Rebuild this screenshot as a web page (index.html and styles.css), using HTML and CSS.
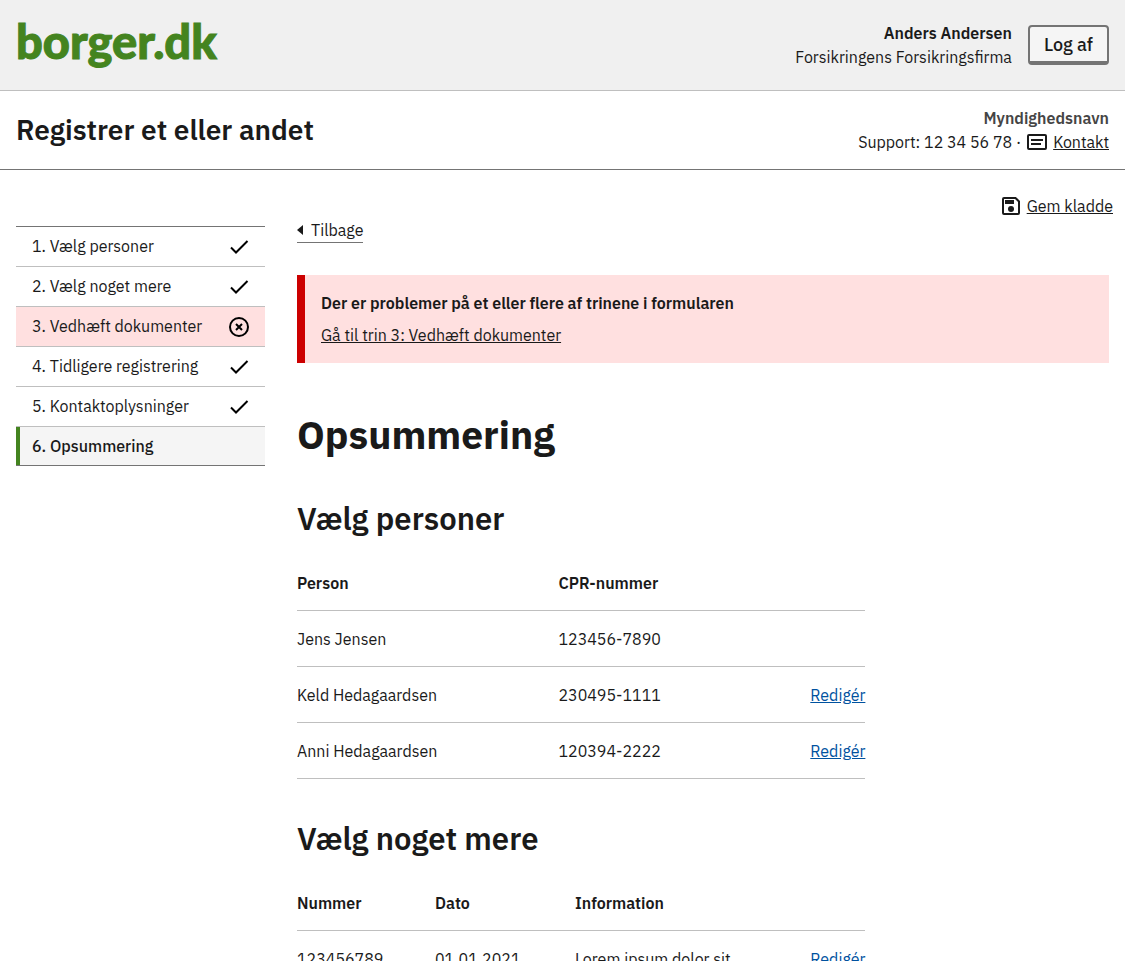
FILE: index.html
```html
<!DOCTYPE html>
<html lang="da">
<head>
<meta charset="utf-8">
<meta name="viewport" content="width=device-width, initial-scale=1">
<title>Registrer et eller andet - borger.dk</title>
<link rel="stylesheet" href="styles.css">
</head>
<body>
<svg class="sprite" aria-hidden="true">
  <symbol id="check" viewBox="0 0 24 24"><path d="M4 12.500 9 17.500 20.500 6" fill="none" stroke="currentColor" stroke-width="2"/></symbol>
</svg>
<header class="portal">
  <a class="logo" href="#">borger.dk</a>
  <div class="user">
    <div class="user-info">
      <strong>Anders Andersen</strong>
      <span>Forsikringens Forsikringsfirma</span>
    </div>
    <button class="logout" type="button">Log af</button>
  </div>
</header>
<div class="solution">
  <p class="solution-title">Registrer et eller andet</p>
  <div class="authority">
    <strong>Myndighedsnavn</strong>
    <div class="support">
      <span>Support: 12 34 56 78 ·</span>
      <svg class="icon-card" width="20" height="16" viewBox="0 0 20 16" aria-hidden="true"><rect x="1" y="1" width="18" height="14" rx="1" fill="none" stroke="currentColor" stroke-width="2"/><path d="M4 6h12M4 10h10" stroke="currentColor" stroke-width="2"/></svg>
      <a href="#">Kontakt</a>
    </div>
  </div>
</div>
<div class="actions">
  <a class="save" href="#">
    <svg width="18" height="18" viewBox="0 0 18 18" aria-hidden="true"><path d="M2 1H13.500L17 4.500V16a1 1 0 0 1-1 1H2a1 1 0 0 1-1-1V2a1 1 0 0 1 1-1Z" fill="none" stroke="currentColor" stroke-width="2"/><path d="M3 3h9v4H3Z" fill="currentColor"/><circle cx="9" cy="12" r="3" fill="currentColor"/></svg>
    <span>Gem kladde</span>
  </a>
</div>
<div class="layout">
  <nav class="steps" aria-label="Trin">
    <a class="step" href="#"><span>1. Vælg personer</span><svg class="state"><use href="#check"/></svg></a>
    <a class="step" href="#"><span>2. Vælg noget mere</span><svg class="state"><use href="#check"/></svg></a>
    <a class="step step-error" href="#"><span>3. Vedhæft dokumenter</span><svg class="state" viewBox="0 0 24 24"><circle cx="12" cy="12" r="9" fill="none" stroke="currentColor" stroke-width="2"/><path d="m9 9 6 6m0-6-6 6" stroke="currentColor" stroke-width="2"/></svg></a>
    <a class="step" href="#"><span>4. Tidligere registrering</span><svg class="state"><use href="#check"/></svg></a>
    <a class="step" href="#"><span>5. Kontaktoplysninger</span><svg class="state"><use href="#check"/></svg></a>
    <a class="step step-current" href="#" aria-current="step"><span>6. Opsummering</span></a>
  </nav>
  <main>
    <a class="back" href="#"><svg width="6" height="10" viewBox="0 0 6 10" aria-hidden="true"><path d="M6 0v10L0 5Z" fill="currentColor"/></svg>Tilbage</a>
    <div class="alert" role="alert">
      <strong>Der er problemer på et eller flere af trinene i formularen</strong>
      <a href="#">Gå til trin 3: Vedhæft dokumenter</a>
    </div>
    <h1>Opsummering</h1>
    <h2>Vælg personer</h2>
    <table class="persons">
      <thead><tr><th scope="col">Person</th><th scope="col">CPR-nummer</th><td></td></tr></thead>
      <tbody>
        <tr><td>Jens Jensen</td><td>123456-7890</td><td></td></tr>
        <tr><td>Keld Hedagaardsen</td><td>230495-1111</td><td><a href="#">Redigér</a></td></tr>
        <tr><td>Anni Hedagaardsen</td><td>120394-2222</td><td><a href="#">Redigér</a></td></tr>
      </tbody>
    </table>
    <h2>Vælg noget mere</h2>
    <table class="entries">
      <thead><tr><th scope="col">Nummer</th><th scope="col">Dato</th><th scope="col">Information</th><td></td></tr></thead>
      <tbody>
        <tr><td>123456789</td><td>01.01.2021</td><td>Lorem ipsum dolor sit</td><td><a href="#">Redigér</a></td></tr>
      </tbody>
    </table>
  </main>
</div>
</body>
</html>
```
FILE: styles.css
```css
* { box-sizing: border-box; }
body {
  margin: 0;
  background: #fff;
  color: #1a1a1a;
  font: 400 16px/24px "IBM Plex Sans", "Noto Sans", sans-serif;
}
a { color: inherit; text-underline-offset: 1px; }
strong, th { font-weight: 600; }
p, h1, h2 { margin: 0; }
.sprite { position: absolute; width: 0; height: 0; }

.portal {
  display: flex;
  justify-content: space-between;
  align-items: center;
  min-height: 91px;
  padding: 0 16px;
  background: #f0f0f0;
  border-bottom: 1px solid #bfbfbf;
}
.logo {
  color: #44841f;
  font: 900 47px/56px Lato, sans-serif;
  -webkit-text-stroke: 1px #44841f;
  text-decoration: none;
  padding-bottom: 8px;
}
.user { display: flex; align-items: center; gap: 16px; }
.user-info, .authority {
  display: flex;
  flex-direction: column;
  align-items: flex-end;
}
.logout {
  height: 40px;
  padding: 2px 14px 0;
  color: #1a1a1a;
  background: #f5f5f5;
  border: 2px solid #747474;
  border-bottom-width: 4px;
  border-radius: 4px;
  font: 500 18px/24px "IBM Plex Sans", "Noto Sans", sans-serif;
}

.solution {
  display: flex;
  justify-content: space-between;
  align-items: center;
  min-height: 79px;
  padding: 0 16px;
  border-bottom: 1px solid #747474;
}
.solution-title { font-size: 28px; line-height: 32px; font-weight: 600; }
.authority strong { color: #454545; }
.support { display: flex; align-items: center; gap: 6px; }

.actions {
  display: flex;
  justify-content: flex-end;
  padding: 24px 12px 0;
}
.save { display: flex; align-items: center; gap: 7px; text-decoration: none; }
.save span { text-decoration: underline; }

.layout {
  display: grid;
  grid-template-columns: 249px minmax(0, 1fr);
  column-gap: 32px;
  align-items: start;
  padding: 0 16px 48px;
}
.steps {
  margin-top: 8px;
  border-top: 1px solid #747474;
  border-bottom: 1px solid #747474;
}
.step {
  display: flex;
  align-items: center;
  justify-content: space-between;
  height: 40px;
  padding: 7px 14px 6px 16px;
  border-bottom: 1px solid #bfbfbf;
  text-decoration: none;
}
.step span { align-self: flex-start; }
.state { width: 24px; height: 24px; color: #000; }
.step-error { background: #ffe0e0; }
.step-current {
  height: 38px;
  padding-left: 12px;
  background: #f5f5f5;
  border-bottom: 0;
  border-left: 4px solid #44841f;
  font-weight: 500;
}

.back {
  display: flex;
  width: fit-content;
  align-items: center;
  gap: 8px;
  border-bottom: 1px solid #747474;
  text-decoration: none;
}
.alert {
  display: flex;
  flex-direction: column;
  align-items: flex-start;
  gap: 8px;
  margin-top: 32px;
  padding: 16px;
  background: #ffe0e0;
  border-left: 8px solid #c00;
}
h1 { margin-top: 48px; font-size: 39px; line-height: 48px; font-weight: 700; }
h2 { margin: 40px 0 16px; font-size: 31px; line-height: 40px; font-weight: 600; }

table { width: 70%; table-layout: fixed; border-collapse: separate; border-spacing: 0; }
th, td {
  padding: 16px 0 15px;
  border-bottom: 1px solid #bfbfbf;
  text-align: left;
  vertical-align: top;
}
td:last-child { text-align: right; }
td a { color: #00529f; }
.persons th:first-child { width: 46%; }
.entries th:nth-child(1) { width: 138px; }
.entries th:nth-child(2) { width: 140px; }
.entries th:nth-child(3) { width: 34%; }
```
